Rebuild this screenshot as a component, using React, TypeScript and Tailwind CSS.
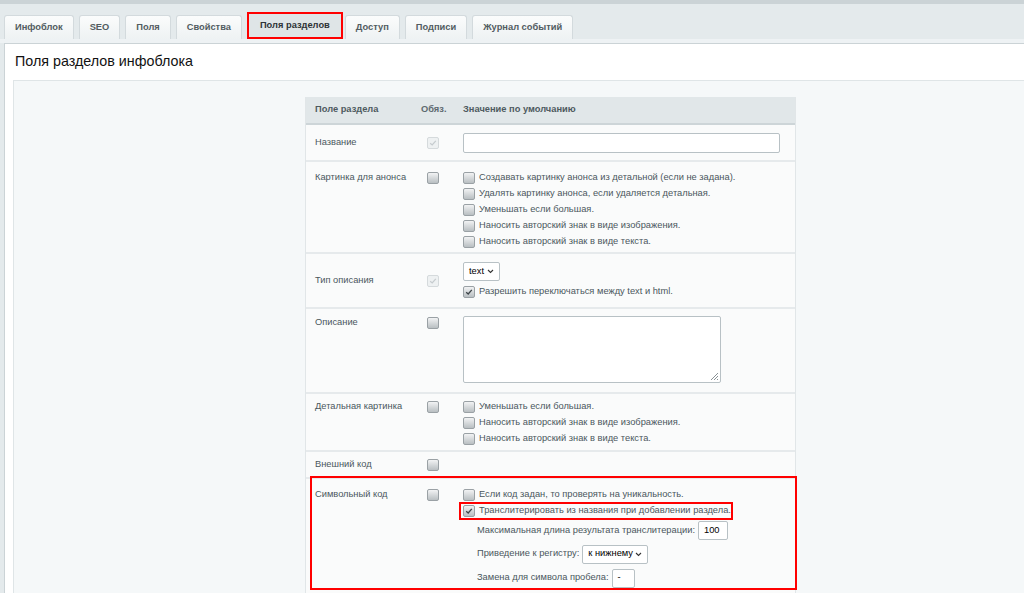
import React from "react";

const tabs = ["Инфоблок", "SEO", "Поля", "Свойства", "Поля разделов", "Доступ", "Подписи", "Журнал событий"];

function Check({ checked = false, disabled = false }: { checked?: boolean; disabled?: boolean }) {
    if (disabled) {
        return (
            <span className="inline-flex items-center justify-center w-[12px] h-[12px] rounded-[2px] border border-[#d5dadc] bg-[#eef1f2] shrink-0">
                <svg width="8" height="8" viewBox="0 0 8 8">
                    <path d="M1.2 4.2 L3.2 6 L6.8 1.8" fill="none" stroke="#c5cbce" strokeWidth="1.2" />
                </svg>
            </span>
        );
    }
    return (
        <span className="inline-flex items-center justify-center w-[12px] h-[12px] rounded-[2px] border border-[#9aa1a5] bg-gradient-to-b from-[#f2f3f4] to-[#b9bfc2] shrink-0">
            {checked && (
                <svg width="8" height="8" viewBox="0 0 8 8">
                    <path d="M1.2 4.2 L3.2 6 L6.8 1.8" fill="none" stroke="#3d4448" strokeWidth="1.3" />
                </svg>
            )}
        </span>
    );
}

function Opt({ text, checked = false }: { text: string; checked?: boolean }) {
    return (
        <div className="flex items-center gap-[4px] h-[16px]">
            <Check checked={checked} />
            <span>{text}</span>
        </div>
    );
}

function Box({ w, children }: { w: string; children?: React.ReactNode }) {
    return (
        <span className={`inline-flex items-center h-[19px] px-[5px] bg-white border border-[#b8c1c5] rounded-[2px] text-[#000] ${w}`}>
            {children}
        </span>
    );
}

function Chevron() {
    return (
        <svg width="7" height="5" viewBox="0 0 7 5" className="ml-auto">
            <path d="M1 1 L3.5 3.5 L6 1" fill="none" stroke="#333" strokeWidth="1.1" />
        </svg>
    );
}

export default function App() {
    return (
        <div className="w-[1024px] h-[593px] overflow-hidden bg-[#e4eaec] text-[9.3px] text-[#4a575d]" style={{ fontFamily: '"Liberation Sans", Arial, sans-serif' }}>
            <div className="h-[4px] bg-[#cbd3d6]" />
            <div className="flex items-end gap-[5px] pl-[4px] h-[35px]">
                {tabs.map((t) =>
                    t === "Поля разделов" ? (
                        <div key={t} className="h-[27px] px-[11px] -mr-[3px] flex items-center border-2 border-[#f00] bg-[#dfe5e7] font-bold text-[#2d3336]">
                            {t}
                        </div>
                    ) : (
                        <div key={t} className="h-[24px] px-[10px] flex items-center rounded-t-[3px] border border-b-0 border-[#d3dadd] bg-gradient-to-b from-[#fbfcfc] to-[#eef2f3] font-bold text-[#525c61]">
                            {t}
                        </div>
                    )
                )}
            </div>
            <div className="h-[4px] bg-[#eef2f4]" />
            <div className="ml-[4px] bg-white border-l border-t border-[#cbd3d6] h-full">
                <div className="h-[36px] flex items-center pl-[10px] text-[14.3px] text-[#111]">Поля разделов инфоблока</div>
                <div className="ml-[8px] h-full bg-[#f5f8f9] border-l border-t border-[#dfe5e7] pt-[16px] pl-[291px]">
                    <div className="w-[491px] bg-[#fafbfb] border-l border-r border-[#e1e6e8]">
                        <div className="flex items-center h-[28px] bg-[#e1e7e9] border-b-2 border-[#cdd5d8] font-bold text-[#4e5a60]">
                            <div className="w-[107px] pl-[9px]">Поле раздела</div>
                            <div className="w-[50px] pl-[8px] text-[#5e6a70]">Обяз.</div>
                            <div>Значение по умолчанию</div>
                        </div>

                        <div className="flex items-center h-[37px] border-b-2 border-[#e6eaec]">
                            <div className="w-[107px] pl-[9px] pt-[1px]">Название</div>
                            <div className="w-[50px] pl-[14px] flex"><Check checked disabled /></div>
                            <div className="flex-1 pr-[15px]">
                                <div className="h-[20px] bg-white border border-[#b8c1c5] rounded-[2px]" />
                            </div>
                        </div>

                        <div className="flex items-start pt-[8px] pb-[2px] border-b-2 border-[#e6eaec]">
                            <div className="w-[107px] pl-[9px] h-[16px] flex items-center">Картинка для анонса</div>
                            <div className="w-[50px] pl-[14px] h-[16px] flex items-center"><Check /></div>
                            <div className="flex flex-col">
                                <Opt text="Создавать картинку анонса из детальной (если не задана)." />
                                <Opt text="Удалять картинку анонса, если удаляется детальная." />
                                <Opt text="Уменьшать если большая." />
                                <Opt text="Наносить авторский знак в виде изображения." />
                                <Opt text="Наносить авторский знак в виде текста." />
                            </div>
                        </div>

                        <div className="flex items-center pt-[8px] pb-[7px] border-b-2 border-[#e6eaec]">
                            <div className="w-[107px] pl-[9px]">Тип описания</div>
                            <div className="w-[50px] pl-[14px] flex"><Check checked disabled /></div>
                            <div className="flex flex-col items-start gap-[3px]">
                                <Box w="w-[37px]">
                                    <span>text</span>
                                    <Chevron />
                                </Box>
                                <Opt checked text="Разрешить переключаться между text и html." />
                            </div>
                        </div>

                        <div className="flex items-start pt-[6px] pb-[9px] border-b-2 border-[#e6eaec]">
                            <div className="w-[107px] pl-[9px] h-[16px] flex items-center">Описание</div>
                            <div className="w-[50px] pl-[14px] h-[16px] flex items-center"><Check /></div>
                            <div className="relative w-[258px] h-[67px] mt-[1px] bg-white border border-[#b8c1c5] rounded-[2px]">
                                <svg width="10" height="10" viewBox="0 0 10 10" className="absolute right-[1px] bottom-[1px]">
                                    <path d="M9 2 L2 9 M9 5 L5 9 M9 8 L8 9" stroke="#8a9296" strokeWidth="1" />
                                </svg>
                            </div>
                        </div>

                        <div className="flex items-start pt-[5px] pb-[3px] border-b-2 border-[#e6eaec]">
                            <div className="w-[107px] pl-[9px] h-[16px] flex items-center">Детальная картинка</div>
                            <div className="w-[50px] pl-[14px] h-[16px] flex items-center"><Check /></div>
                            <div className="flex flex-col">
                                <Opt text="Уменьшать если большая." />
                                <Opt text="Наносить авторский знак в виде изображения." />
                                <Opt text="Наносить авторский знак в виде текста." />
                            </div>
                        </div>

                        <div className="flex items-center h-[27px] border-b-2 border-[#e6eaec]">
                            <div className="w-[107px] pl-[9px]">Внешний код</div>
                            <div className="w-[50px] pl-[14px] flex"><Check /></div>
                        </div>

                        <div className="relative flex items-start pt-[8px] pb-[8px]">
                            <div className="absolute left-[4px] -right-[2px] -top-[3px] h-[114px] border-2 border-[#f00]" />
                            <div className="w-[107px] pl-[9px] h-[16px] flex items-center">Символьный код</div>
                            <div className="w-[50px] pl-[14px] h-[16px] flex items-center"><Check /></div>
                            <div className="flex flex-col">
                                <Opt text="Если код задан, то проверять на уникальность." />
                                <div className="relative">
                                    <div className="absolute -left-[4px] right-[-2px] -top-[1px] -bottom-[1px] border-2 border-[#f00]" />
                                    <Opt checked text="Транслитерировать из названия при добавлении раздела." />
                                </div>
                                <div className="flex items-center gap-[3px] pl-[14px] mt-[2px] h-[19px]">
                                    <span>Максимальная длина результата транслитерации:</span>
                                    <Box w="w-[30px]">100</Box>
                                </div>
                                <div className="flex items-center gap-[3px] pl-[14px] mt-[4px] h-[20px]">
                                    <span>Приведение к регистру:</span>
                                    <Box w="w-[66px]">
                                        <span>к нижнему</span>
                                        <Chevron />
                                    </Box>
                                </div>
                                <div className="flex items-center gap-[3px] pl-[14px] mt-[5px] h-[18px]">
                                    <span>Замена для символа пробела:</span>
                                    <Box w="w-[23px]">-</Box>
                                </div>
                            </div>
                        </div>
                    </div>
                </div>
            </div>
        </div>
    );
}
